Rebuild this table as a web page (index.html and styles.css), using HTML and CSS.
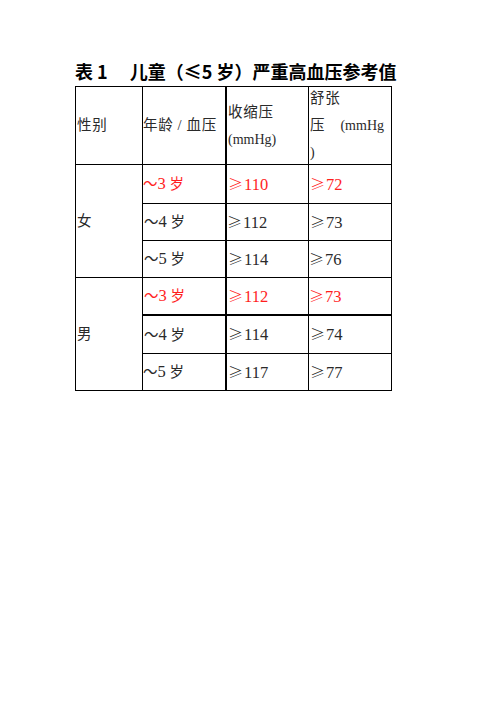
FILE: index.html
```html
<!DOCTYPE html>
<html lang="zh-CN">
<head>
<meta charset="utf-8">
<title>儿童严重高血压参考值</title>
<link rel="stylesheet" href="styles.css">
</head>
<body>
<div class="page">
  <h1 class="title"><span>表 1</span><span class="gap"></span><span>儿童（≤5 岁）严重高血压参考值</span></h1>
  <div class="grid">
    <div class="cell h"><span>性别</span></div>
    <div class="cell h"><span>年龄<span class="sl">/</span>血压</span></div>
    <div class="cell h c3 stack"><span>收缩压</span><span class="lat">(mmHg)</span></div>
    <div class="cell h stack"><span>舒张</span><span class="just"><span>压</span><span class="lat">(mmHg</span></span><span class="lat">)</span></div>

    <div class="cell sex"><span>女</span></div>
    <div class="cell red"><span>～<span class="n">3</span> 岁</span></div>
    <div class="cell c3 red"><span><span class="ge">≥</span><span class="n">110</span></span></div>
    <div class="cell red"><span><span class="ge">≥</span><span class="n">72</span></span></div>

    <div class="cell"><span>～<span class="n">4</span> 岁</span></div>
    <div class="cell c3"><span><span class="ge">≥</span><span class="n">112</span></span></div>
    <div class="cell"><span><span class="ge">≥</span><span class="n">73</span></span></div>

    <div class="cell"><span>～<span class="n">5</span> 岁</span></div>
    <div class="cell c3"><span><span class="ge">≥</span><span class="n">114</span></span></div>
    <div class="cell"><span><span class="ge">≥</span><span class="n">76</span></span></div>

    <div class="cell sex"><span>男</span></div>
    <div class="cell red thick"><span>～<span class="n">3</span> 岁</span></div>
    <div class="cell c3 red thick"><span><span class="ge">≥</span><span class="n">112</span></span></div>
    <div class="cell red thick"><span><span class="ge">≥</span><span class="n">73</span></span></div>

    <div class="cell"><span>～<span class="n">4</span> 岁</span></div>
    <div class="cell c3"><span><span class="ge">≥</span><span class="n">114</span></span></div>
    <div class="cell"><span><span class="ge">≥</span><span class="n">74</span></span></div>

    <div class="cell"><span>～<span class="n">5</span> 岁</span></div>
    <div class="cell c3"><span><span class="ge">≥</span><span class="n">117</span></span></div>
    <div class="cell"><span><span class="ge">≥</span><span class="n">77</span></span></div>
  </div>
</div>
</body>
</html>
```
FILE: styles.css
```css
html, body {
  margin: 0;
  padding: 0;
  background: #fff;
}

.page {
  padding: 60px 0 0 75px;
}

.title {
  margin: 0 0 4px 0;
  font-family: "Noto Sans CJK SC", "Noto Sans", sans-serif;
  font-weight: 700;
  font-size: 18px;
  line-height: 22px;
  color: #000;
  white-space: nowrap;
  display: flex;
}

.title .gap {
  display: inline-block;
  width: 22px;
}

.grid {
  display: grid;
  grid-template-columns: 67px 83px 83px 83px;
  grid-template-rows: 78px 39px 37px 37px 38px 38px 37px;
  width: max-content;
  border-left: 1px solid #000;
  border-top: 1px solid #000;
  font-family: "Liberation Serif", "Noto Sans CJK SC", serif;
  font-size: 14.5px;
  color: #2a2a2a;
}

.cell {
  box-sizing: border-box;
  border-right: 1px solid #000;
  border-bottom: 1px solid #000;
  display: flex;
  align-items: center;
  padding-left: 1px;
  white-space: pre;
  line-height: 20px;
}

.grid > .cell:nth-child(4n+2) {
  padding-left: 0;
}

.h {
  line-height: 27px;
  letter-spacing: 0.8px;
}

.stack {
  flex-direction: column;
  justify-content: center;
  align-items: stretch;
}

.stack > span {
  display: block;
}

.just {
  display: flex !important;
  justify-content: space-between;
  padding-right: 7px;
}

.lat {
  font-size: 14px;
  letter-spacing: 0;
}

.sl {
  margin: 0 4px;
}

.c3 {
  border-left: 2px solid #000;
  margin-left: -1px;
  padding-left: 1px;
}

.grid > .cell:nth-child(2) {
  border-right: 0;
}

.sex {
  grid-row: span 3;
}

.thick {
  border-bottom-width: 2px;
}

.red {
  color: #ff1e1e;
}

.n {
  font-size: 16.5px;
}

.ge {
  font-family: "Noto Sans CJK SC", sans-serif;
  font-size: 15px;
  font-weight: 300;
  margin-right: 1px;
}
```
